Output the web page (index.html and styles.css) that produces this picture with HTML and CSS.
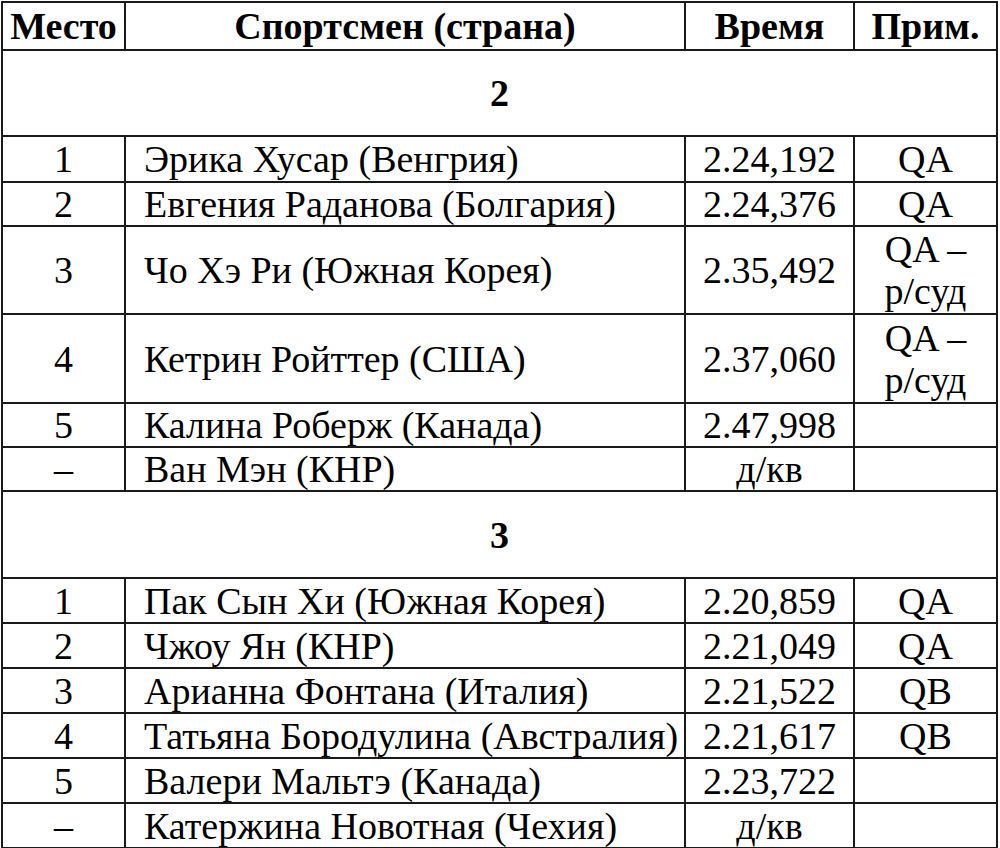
FILE: index.html
```html
<!DOCTYPE html>
<html lang="ru">
<head>
<meta charset="utf-8">
<link rel="stylesheet" href="styles.css">
</head>
<body>
<div class="results" role="table">
  <div class="row head" role="row">
    <div class="cell" role="columnheader">Место</div>
    <div class="cell" role="columnheader">Спортсмен (страна)</div>
    <div class="cell" role="columnheader">Время</div>
    <div class="cell" role="columnheader">Прим.</div>
  </div>

  <div class="row section" role="row"><div class="cell" role="cell">2</div></div>

  <div class="row h46" role="row"><div class="cell" role="cell">1</div><div class="cell name" role="cell">Эрика Хусар (Венгрия)</div><div class="cell" role="cell">2.24,192</div><div class="cell" role="cell">QA</div></div>
  <div class="row h44" role="row"><div class="cell" role="cell">2</div><div class="cell name" role="cell">Евгения Раданова (Болгария)</div><div class="cell" role="cell">2.24,376</div><div class="cell" role="cell">QA</div></div>
  <div class="row h88" role="row"><div class="cell" role="cell">3</div><div class="cell name" role="cell">Чо Хэ Ри (Южная Корея)</div><div class="cell" role="cell">2.35,492</div><div class="cell" role="cell">QA –<br>р/суд</div></div>
  <div class="row h89" role="row"><div class="cell" role="cell">4</div><div class="cell name" role="cell">Кетрин Ройттер (США)</div><div class="cell" role="cell">2.37,060</div><div class="cell" role="cell">QA –<br>р/суд</div></div>
  <div class="row h44" role="row"><div class="cell" role="cell">5</div><div class="cell name" role="cell">Калина Роберж (Канада)</div><div class="cell" role="cell">2.47,998</div><div class="cell" role="cell"></div></div>
  <div class="row h44" role="row"><div class="cell" role="cell">–</div><div class="cell name" role="cell">Ван Мэн (КНР)</div><div class="cell" role="cell">д/кв</div><div class="cell" role="cell"></div></div>

  <div class="row section s87" role="row"><div class="cell" role="cell">3</div></div>

  <div class="row h45" role="row"><div class="cell" role="cell">1</div><div class="cell name" role="cell">Пак Сын Хи (Южная Корея)</div><div class="cell" role="cell">2.20,859</div><div class="cell" role="cell">QA</div></div>
  <div class="row h45" role="row"><div class="cell" role="cell">2</div><div class="cell name" role="cell">Чжоу Ян (КНР)</div><div class="cell" role="cell">2.21,049</div><div class="cell" role="cell">QA</div></div>
  <div class="row h45" role="row"><div class="cell" role="cell">3</div><div class="cell name" role="cell">Арианна Фонтана (Италия)</div><div class="cell" role="cell">2.21,522</div><div class="cell" role="cell">QB</div></div>
  <div class="row h45" role="row"><div class="cell" role="cell">4</div><div class="cell name" role="cell">Татьяна Бородулина (Австралия)</div><div class="cell" role="cell">2.21,617</div><div class="cell" role="cell">QB</div></div>
  <div class="row h45" role="row"><div class="cell" role="cell">5</div><div class="cell name" role="cell">Валери Мальтэ (Канада)</div><div class="cell" role="cell">2.23,722</div><div class="cell" role="cell"></div></div>
  <div class="row h45" role="row"><div class="cell" role="cell">–</div><div class="cell name" role="cell">Катержина Новотная (Чехия)</div><div class="cell" role="cell">д/кв</div><div class="cell" role="cell"></div></div>
</div>
</body>
</html>
```

FILE: styles.css
```css
body {
  margin: 0;
  padding: 1px 0 0 1px;
  background: #ffffff;
}

.results {
  width: 997px;
  box-sizing: border-box;
  border-top: 2px solid #1a1a1a;
  border-left: 2px solid #1a1a1a;
  font-family: "Liberation Serif", "Times New Roman", serif;
  font-size: 38px;
  line-height: 42px;
  color: #000000;
}

.row {
  display: grid;
  grid-template-columns: 123px 560px 169px 143px;
}

.cell {
  box-sizing: border-box;
  border-right: 2px solid #1a1a1a;
  border-bottom: 2px solid #1a1a1a;
  display: flex;
  flex-direction: column;
  justify-content: center;
  align-items: center;
  text-align: center;
  white-space: nowrap;
}

.cell.name {
  align-items: flex-start;
  text-align: left;
  padding-left: 18px;
}

.head { height: 48px; }
.head .cell { font-weight: bold; }

.section { height: 86px; grid-template-columns: 995px; }
.section.s87 { height: 87px; }
.section .cell { font-weight: bold; }

.h44 { height: 44px; }
.h45 { height: 45px; }
.h46 { height: 46px; }
.h88 { height: 88px; }
.h89 { height: 89px; }
```
